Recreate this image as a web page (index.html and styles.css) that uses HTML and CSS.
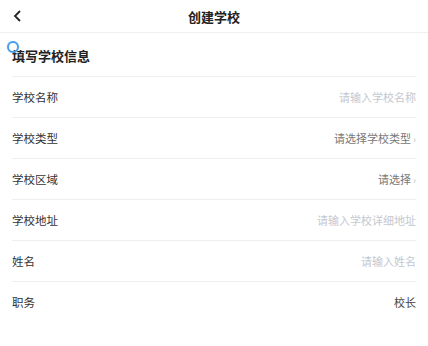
FILE: index.html
```html
<!DOCTYPE html>
<html>
	<head>
		<title>创建学校</title>
		<link rel="stylesheet" href="styles.css">
	</head>
	<body>
		<div class="nav">
			<svg class="back" width="10" height="12" viewBox="0 0 10 12">
				<path d="M7 1 L2 6 L7 11" fill="none" stroke="#222" stroke-width="1.8"/>
			</svg>
			<div class="nav-title">创建学校</div>
		</div>

		<div class="section">
			<span class="dot"></span>
			<div class="section-title">填写学校信息</div>
		</div>

		<div class="list">
			<div class="row">
				<span class="label">学校名称</span>
				<span class="value placeholder">请输入学校名称</span>
			</div>
			<div class="row">
				<span class="label">学校类型</span>
				<span class="value select">请选择学校类型<i class="arrow">›</i></span>
			</div>
			<div class="row">
				<span class="label">学校区域</span>
				<span class="value select">请选择<i class="arrow">›</i></span>
			</div>
			<div class="row">
				<span class="label">学校地址</span>
				<span class="value placeholder">请输入学校详细地址</span>
			</div>
			<div class="row">
				<span class="label">姓名</span>
				<span class="value placeholder">请输入姓名</span>
			</div>
			<div class="row last">
				<span class="label">职务</span>
				<span class="value filled">校长</span>
			</div>
		</div>
	</body>
</html>
```
FILE: styles.css
```css
body {
	margin: 0;
	font-family: "Noto Sans CJK SC", "Noto Sans", sans-serif;
	background: #fff;
	color: #333;
}
.nav {
	position: relative;
	height: 32px;
	border-bottom: 1px solid #f0f0f0;
	display: flex;
	align-items: center;
	justify-content: center;
}
.back { position: absolute; left: 13px; top: 10px; }
.nav-title { font-size: 13px; font-weight: bold; color: #222; }

.section {
	position: relative;
	height: 43px;
	margin: 0 12px;
	border-bottom: 1px solid #eee;
	display: flex;
	align-items: center;
}
.section-title { font-size: 13px; font-weight: bold; color: #222; padding-top: 2px; }
.dot {
	position: absolute;
	left: -5px;
	top: 8px;
	width: 8px;
	height: 8px;
	border: 2.5px solid #4a9de8;
	border-radius: 50%;
	box-shadow: 0 0 1px #8cc2f2;
}

.list { margin: 0 12px; }
.row {
	height: 40px;
	border-bottom: 1px solid #eee;
	display: flex;
	align-items: center;
	justify-content: space-between;
}
.row.last { border-bottom: none; }
.label { font-size: 11.5px; color: #333; }
.value { font-size: 11px; }
.placeholder { color: #c4c8d0; }
.select { color: #777; }
.filled { color: #444; }
.arrow { font-style: normal; color: #c4c4c4; margin-left: 2px; font-size: 10px; }
```
